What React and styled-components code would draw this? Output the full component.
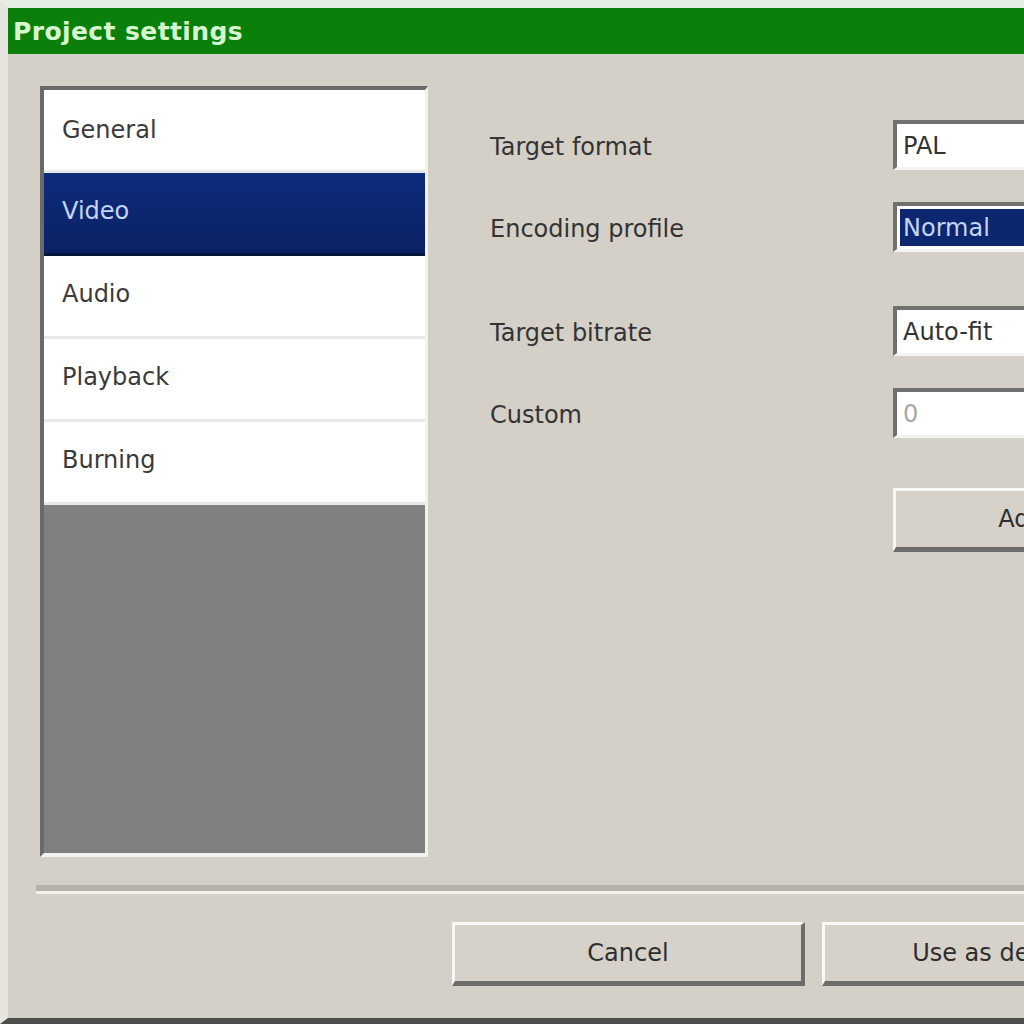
import styled, { createGlobalStyle } from "styled-components";

const GlobalStyle = createGlobalStyle`
  html, body {
    margin: 0;
    padding: 0;
    background: #d4d0c8;
  }
  * {
    box-sizing: border-box;
  }
`;

const Window = styled.div`
  width: 1024px;
  height: 1024px;
  overflow: hidden;
  display: flex;
  flex-direction: column;
  background: #d4d0c8;
  border-top: 8px solid #e4eee2;
  border-left: 8px solid #e6e4de;
  border-bottom: 6px solid #4c4c4a;
  font-family: "DejaVu Sans", Verdana, sans-serif;
  font-size: 24px;
  color: #333333;
`;

const TitleBar = styled.div`
  height: 46px;
  flex-shrink: 0;
  display: flex;
  align-items: center;
  padding-left: 5px;
  background: #0a800a;
  color: #d6f6cf;
  font-weight: bold;
  font-size: 25px;
  letter-spacing: 0.4px;
`;

const Main = styled.div`
  flex: 1;
  display: flex;
  flex-direction: column;
  padding: 32px 0 0 32px;
`;

const Content = styled.div`
  display: flex;
`;

const ListBox = styled.div`
  width: 388px;
  height: 771px;
  flex-shrink: 0;
  display: flex;
  flex-direction: column;
  background: #808080;
  border-top: 4px solid #6a6a6a;
  border-left: 4px solid #6a6a6a;
  border-right: 3px solid #f2f2f0;
  border-bottom: 4px solid #f2f2f0;
`;

const ListItem = styled.div`
  height: 83px;
  flex-shrink: 0;
  display: flex;
  align-items: center;
  padding: 0 0 4px 18px;
  background: ${(p) =>
    p.selected ? "linear-gradient(#0e2c7c, #0a2264)" : "#ffffff"};
  color: ${(p) => (p.selected ? "#c4d4f4" : "#3a3a3a")};
  border-top: ${(p) => (p.first ? "4px solid #ffffff" : "none")};
  border-bottom: 3px solid ${(p) => (p.selected ? "#051338" : "#e8e8e8")};
`;

const Form = styled.div`
  flex: 1;
  display: flex;
  flex-direction: column;
  padding: 34px 0 0 62px;
`;

const Row = styled.div`
  display: grid;
  grid-template-columns: 403px 360px;
  align-items: center;
  height: 50px;
  margin-bottom: ${(p) => p.gap || 32}px;
`;

const Label = styled.div`
  padding-top: 3px;
`;

const Field = styled.div`
  height: 50px;
  display: flex;
  align-items: stretch;
  padding: 3px;
  background: #ffffff;
  border-top: 4px solid #707070;
  border-left: 4px solid #707070;
  border-right: 2px solid #f4f4f2;
  border-bottom: 3px solid #f4f4f2;
`;

const FieldText = styled.div`
  flex: 1;
  display: flex;
  align-items: center;
  padding-left: 3px;
  background: ${(p) => (p.selected ? "#0c2670" : "transparent")};
  color: ${(p) =>
    p.selected ? "#c4d4f4" : p.disabled ? "#a8a8a8" : "#333333"};
`;

const Button = styled.div`
  width: ${(p) => p.width || 353}px;
  height: 64px;
  flex-shrink: 0;
  display: flex;
  align-items: center;
  justify-content: center;
  background: #d6d2ca;
  color: #2e2e2e;
  border-top: 3px solid #f8f8f6;
  border-left: 3px solid #f8f8f6;
  border-right: 4px solid #6c6c6a;
  border-bottom: 5px solid #6c6c6a;
  white-space: nowrap;
`;

const Separator = styled.div`
  margin: 28px 0 0 -4px;
  border-top: 6px solid #b6b2aa;
  border-bottom: 3px solid #f4f2ee;
`;

const ButtonRow = styled.div`
  display: flex;
  gap: 17px;
  padding: 28px 0 0 412px;
`;

const pages = ["General", "Video", "Audio", "Playback", "Burning"];

export default function App() {
  return (
    <>
      <GlobalStyle />
      <Window>
        <TitleBar>Project settings</TitleBar>
        <Main>
          <Content>
            <ListBox>
              {pages.map((name, i) => (
                <ListItem key={name} first={i === 0} selected={name === "Video"}>
                  {name}
                </ListItem>
              ))}
            </ListBox>
            <Form>
              <Row>
                <Label>Target format</Label>
                <Field>
                  <FieldText>PAL</FieldText>
                </Field>
              </Row>
              <Row gap={54}>
                <Label>Encoding profile</Label>
                <Field>
                  <FieldText selected>Normal</FieldText>
                </Field>
              </Row>
              <Row>
                <Label>Target bitrate</Label>
                <Field>
                  <FieldText>Auto-fit</FieldText>
                </Field>
              </Row>
              <Row gap={50}>
                <Label>Custom</Label>
                <Field>
                  <FieldText disabled>0</FieldText>
                </Field>
              </Row>
              <Row>
                <span />
                <Button>Advanced...</Button>
              </Row>
            </Form>
          </Content>
          <Separator />
          <ButtonRow>
            <Button>Cancel</Button>
            <Button>Use as default</Button>
          </ButtonRow>
        </Main>
      </Window>
    </>
  );
}
